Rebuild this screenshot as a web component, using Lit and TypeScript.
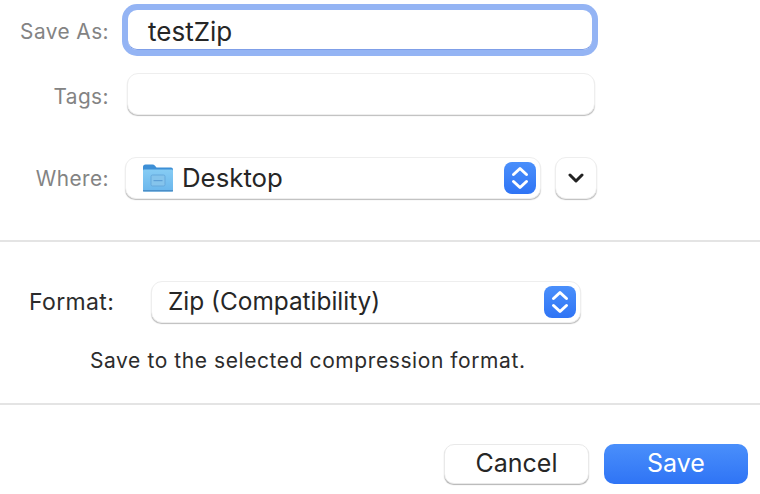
import { LitElement, html, css, svg } from "lit";
import { customElement } from "lit/decorators.js";

const updown = svg`<svg class="updown" viewBox="0 0 32 32" width="32" height="32"><defs><linearGradient id="bg" x1="0" y1="0" x2="0" y2="1"><stop offset="0" stop-color="#4a8ffb"/><stop offset="1" stop-color="#2f74f5"/></linearGradient></defs><rect width="32" height="32" rx="8" fill="url(#bg)"/><path d="M9.5 12.5 16 6.5l6.500 6M9.500 19.500 16 25.500l6.500-6" fill="none" stroke="#fff" stroke-width="3" stroke-linecap="round" stroke-linejoin="round"/></svg>`;

const folder = svg`<svg viewBox="0 0 30 28" width="30" height="28"><defs><linearGradient id="fb" x1="0" y1="0" x2="0" y2="1"><stop offset="0" stop-color="#86ccf4"/><stop offset="1" stop-color="#6ab6ec"/></linearGradient></defs><path d="M0 3Q0 .5 2.500 .5H9.500Q11 .5 12 1.800L13.500 3.500H28Q30 3.500 30 5.500V12H0Z" fill="#3d8fd6"/><path d="M0 6.500Q0 5.500 1 5.500H29Q30 5.500 30 6.500V26Q30 27.500 28.500 27.500H1.500Q0 27.500 0 26Z" fill="url(#fb)"/><rect y="26" width="30" height="1.500" fill="#4b8fc8"/><rect x="8" y="11" width="14" height="11" rx="1.500" fill="#85c4ec" stroke="#66a9dc" stroke-width="1"/><rect x="10.500" y="16" width="9" height="1.200" fill="#5d9fd6"/></svg>`;

@customElement("app-root")
export class AppRoot extends LitElement {
  static styles = css`
    :host {
      display: block;
      width: 760px;
      height: 494px;
      overflow: hidden;
      background: #fff;
      font-family: Inter, "Liberation Sans", sans-serif;
      color: #262626;
      box-sizing: border-box;
    }
    * { box-sizing: border-box; }
    .top { height: 240px; padding-top: 10px; display: flex; flex-direction: column; }
    .row { display: flex; align-items: center; }
    .lbl {
      width: 109px;
      text-align: right;
      font-size: 20.800px;
      color: #838383;
      letter-spacing: 0.45px;
    }
    .l-save { padding-top: 2px; }
    .l-tags { padding-top: 4px; }
    .name {
      margin-left: 19px;
      width: 464px;
      height: 40px;
      border-radius: 9px;
      background: #fff;
      box-shadow: 0 0 0 6px #94b4f4, inset 0 -1px 0 #7f9fe8;
      display: flex;
      align-items: center;
      padding-left: 20px;
      padding-top: 2px;
      font-size: 26px;
      color: #262626;
    }
    .tags {
      margin-left: 18px;
      width: 468px;
      height: 42px;
      border-radius: 11px;
      background: #fff;
      border: 1px solid #eeeeee;
      box-shadow: 0 1.500px 1px -0.500px #bdbdbd;
    }
    .r-tags { margin-top: 23px; }
    .r-where { margin-top: 42px; }
    .popup {
      height: 42px;
      border-radius: 11px;
      background: #fff;
      border: 1px solid #eeeeee;
      box-shadow: 0 1.500px 1px -0.500px #bdbdbd;
      display: flex;
      align-items: center;
    }
    .where { margin-left: 16px; width: 416px; padding-left: 17px; font-size: 25.800px; }
    .where .txt { margin-left: 9px; flex: 1; padding-bottom: 2px; }
    .popup svg { display: block; }
    .updown { margin-right: 4px; flex: none; }
    .more {
      margin-left: 14px;
      width: 42px;
      height: 42px;
      border-radius: 11px;
      background: #fff;
      border: 1px solid #eeeeee;
      box-shadow: 0 1.500px 1px -0.500px #bdbdbd;
      display: flex;
      align-items: center;
      justify-content: center;
    }
    hr { margin: 0; border: 0; height: 2px; background: #e4e4e4; }
    .mid { height: 161px; padding-top: 39px; }
    .fmt-lbl { width: 115px; padding-left: 29px; font-size: 23px; color: #2c2c2c; white-space: nowrap; letter-spacing: 0.35px; padding-bottom: 1px; }
    .format { margin-left: 36px; width: 430px; padding-left: 16px; font-size: 24.400px; }
    .format .txt { flex: 1; padding-bottom: 2px; }
    .desc { margin: 25px 0 0 90px; font-size: 21px; letter-spacing: 0.58px; color: #2c2c2c; line-height: 26px; }
    .foot { display: flex; justify-content: flex-end; gap: 15px; padding: 39px 12px 0 0; }
    .btn {
      width: 145px;
      height: 40px;
      border-radius: 10px;
      display: flex;
      align-items: center;
      justify-content: center;
      font-size: 25px;
      padding-bottom: 2px;
    }
    .cancel { background: #fff; border: 1px solid #e9e9e9; box-shadow: 0 1.500px 1px -0.500px #b5b5b5; color: #262626; }
    .save { width: 144px; background: linear-gradient(#4a8ffb, #2f74f5); color: #fff; }
  `;

  render() {
    return html`
      <div class="top">
        <div class="row">
          <div class="lbl l-save">Save As:</div>
          <div class="name">testZip</div>
        </div>
        <div class="row r-tags">
          <div class="lbl l-tags">Tags:</div>
          <div class="tags"></div>
        </div>
        <div class="row r-where">
          <div class="lbl">Where:</div>
          <div class="popup where">
            ${folder}
            <span class="txt">Desktop</span>
            ${updown}
          </div>
          <div class="more">
            <svg viewBox="0 0 16 10" width="16" height="10"><path d="M2 2 8 8l6-6" fill="none" stroke="#222" stroke-width="3" stroke-linecap="round" stroke-linejoin="round"/></svg>
          </div>
        </div>
      </div>
      <hr />
      <div class="mid">
        <div class="row">
          <div class="fmt-lbl">Format:</div>
          <div class="popup format">
            <span class="txt">Zip (Compatibility)</span>
            ${updown}
          </div>
        </div>
        <div class="desc">Save to the selected compression format.</div>
      </div>
      <hr />
      <div class="foot">
        <div class="btn cancel">Cancel</div>
        <div class="btn save">Save</div>
      </div>
    `;
  }
}
